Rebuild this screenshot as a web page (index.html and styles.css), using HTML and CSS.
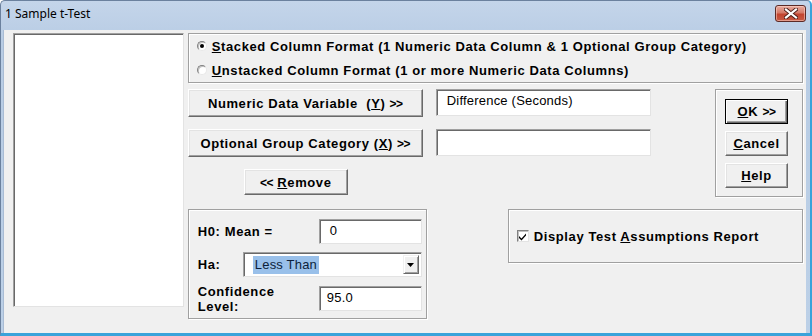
FILE: index.html
```html
<!DOCTYPE html>
<html>
<head>
<meta charset="utf-8">
<link rel="stylesheet" href="styles.css">
</head>
<body>
<div class="window">
  <div class="titlebar">
    <span class="title">1 Sample t-Test</span>
    <div class="close">
      <svg width="14" height="11" viewBox="0 0 14 11">
        <path d="M2 1.5 L12 9.5 M12 1.5 L2 9.5" stroke="#4a1c16" stroke-width="4" stroke-linecap="square"/>
        <path d="M2 1.5 L12 9.5 M12 1.5 L2 9.5" stroke="#ffffff" stroke-width="2.2" stroke-linecap="square"/>
      </svg>
    </div>
  </div>
  <div class="client">
    <div class="listbox"></div>
    <div class="main">
      <div class="group radio-group">
        <div class="radio-row"><span class="radio checked"></span><span class="lbl"><u>S</u>tacked Column Format (1 Numeric Data Column &amp; 1 Optional Group Category)</span></div>
        <div class="radio-row"><span class="radio"></span><span class="lbl"><u>U</u>nstacked Column Format (1 or more Numeric Data Columns)</span></div>
      </div>
      <div class="mid">
        <div class="fields">
          <div class="field-row">
            <div class="btn wide"><span>Numeric Data Variable&nbsp; (<u>Y</u>) <span class="chev">&gt;&gt;</span></span></div>
            <div class="textbox"><span>Difference (Seconds)</span></div>
          </div>
          <div class="field-row">
            <div class="btn wide"><span>Optional Group Category (<u>X</u>) <span class="chev">&gt;&gt;</span></span></div>
            <div class="textbox"></div>
          </div>
          <div class="btn remove"><span><span class="chev">&lt;&lt;</span> <u>R</u>emove</span></div>
        </div>
        <div class="group btnbox">
          <div class="btn small default"><span><u>O</u>K <span class="chev">&gt;&gt;</span></span></div>
          <div class="btn small"><span><u>C</u>ancel</span></div>
          <div class="btn small"><span><u>H</u>elp</span></div>
        </div>
      </div>
      <div class="bottom">
        <div class="group hyp">
          <div class="hrow r1">
            <span class="lbl">H0: Mean =</span>
            <div class="textbox num"><span>0</span></div>
          </div>
          <div class="hrow r2">
            <span class="lbl ha">Ha:</span>
            <div class="combo">
              <span class="combo-text"><span class="sel">Less Than</span></span>
              <span class="combo-btn">
                <svg width="7" height="4" viewBox="0 0 7 4"><path d="M0 0 H7 L3.5 4 Z" fill="#000"/></svg>
              </span>
            </div>
          </div>
          <div class="hrow r3">
            <span class="lbl two">Confidence<br>Level:</span>
            <div class="textbox num"><span>95.0</span></div>
          </div>
        </div>
        <div class="group check-group">
          <span class="checkbox">
            <svg width="9" height="9" viewBox="0 0 9 9"><path d="M1 4 L3.5 6.5 L8 1.5 V3.5 L3.5 8.5 L1 6 Z" fill="#000"/></svg>
          </span>
          <span class="lbl">Display Test <u>A</u>ssumptions Report</span>
        </div>
      </div>
    </div>
  </div>
</div>
</body>
</html>
```

FILE: styles.css
```css
* { box-sizing: border-box; }
html, body { margin: 0; padding: 0; background: #ffffff; }
.window {
  width: 812px;
  height: 336px;
  display: flex;
  flex-direction: column;
  background: linear-gradient(#c4d5ea, #b8cce4 40px, #bcd0e7);
  border-right: 2px solid #3aa3da;
  border-bottom: 3px solid #3aa3da;
  border-top: 1px solid #6b819e;
  border-left: 1px solid #6b819e;
  border-radius: 5px 5px 0 0;
  font-family: "Liberation Sans", Arial, sans-serif;
  font-size: 13px;
  color: #000;
}
.titlebar {
  height: 29px;
  flex: none;
  display: flex;
  align-items: flex-start;
  justify-content: space-between;
  padding: 0 4px 0 4px;
}
.title {
  font-family: "Noto Sans", "Open Sans", sans-serif;
  font-size: 12px;
  line-height: 26px;
  color: #000;
}
.close {
  margin-top: 4px;
  width: 31px;
  height: 17px;
  border: 1px solid #5c2a26;
  border-radius: 3px;
  background: linear-gradient(#e8ab9f, #d57a68 45%, #c2442f 55%, #c75a44);
  display: flex;
  align-items: center;
  justify-content: center;
  box-shadow: inset 0 0 0 1px rgba(255,220,210,0.5);
}
.client {
  flex: 1;
  margin: 0 4px 0 2px;
  background: #f0f0f0;
  display: flex;
  gap: 4px;
  padding: 3px 3px 0 9px;
  border-left: 1px solid #a9bcd4;
}
.listbox {
  width: 171px;
  height: 274px;
  background: #fff;
  border: 1px solid;
  border-color: #a0a0a0 #e3e3e3 #e3e3e3 #a0a0a0;
  box-shadow: inset 1px 1px 0 #696969;
}
.main {
  width: 616px;
  display: flex;
  flex-direction: column;
}
.group {
  border: 1px solid #a0a0a0;
  box-shadow: 1px 1px 0 #fff, inset 1px 1px 0 #fff;
}
.lbl { font-weight: bold; white-space: nowrap; letter-spacing: 0.6px; }
.radio-group {
  height: 50px;
  display: flex;
  flex-direction: column;
  padding-left: 8px;
}
.radio-row {
  height: 24px;
  display: flex;
  align-items: center;
  gap: 5px;
}
.radio {
  width: 10px;
  height: 10px;
  border-radius: 50%;
  background: #fff;
  border: 1px solid;
  border-color: #808080 #e8e8e8 #e8e8e8 #808080;
  box-shadow: inset 1px 1px 0 #c0c0c0;
  position: relative;
  flex: none;
}
.radio.checked::after {
  content: "";
  position: absolute;
  left: 2px;
  top: 2px;
  width: 4px;
  height: 4px;
  border-radius: 50%;
  background: #000;
}
.mid {
  margin-top: 6px;
  display: flex;
}
.fields {
  width: 463px;
  display: flex;
  flex-direction: column;
  gap: 12px;
}
.field-row {
  display: flex;
  gap: 13px;
  align-items: flex-start;
}
.btn {
  background: #f0f0f0;
  border: 1px solid;
  border-color: #ffffff #696969 #696969 #ffffff;
  box-shadow: inset -1px -1px 0 #a0a0a0, inset 1px 1px 0 #e3e3e3;
  font-weight: bold;
  letter-spacing: 0.6px;
  display: flex;
  align-items: center;
  justify-content: center;
  white-space: nowrap;
}
.chev { font-size: 12px; letter-spacing: -0.5px; }
.btn.wide { width: 235px; height: 28px; }
.btn.remove { width: 104px; height: 26px; margin-left: 56px; }
.textbox {
  background: #fff;
  border: 1px solid;
  border-color: #a0a0a0 #e3e3e3 #e3e3e3 #a0a0a0;
  box-shadow: inset 1px 1px 0 #696969;
  font-weight: normal;
  letter-spacing: 0.2px;
  display: flex;
  align-items: center;
}
.field-row .textbox {
  width: 215px;
  height: 27px;
  padding: 0 0 4px 10px;
}
.btnbox {
  margin-left: auto;
  width: 88px;
  height: 108px;
  padding: 9px 0 0 9px;
  display: flex;
  flex-direction: column;
  gap: 7px;
}
.btn.small { width: 63px; height: 25px; }
.btn.default {
  border: 1px solid #000;
  box-shadow: inset 1px 1px 0 #fff, inset -1px -1px 0 #696969, inset -2px -2px 0 #a0a0a0;
}
.bottom {
  margin-top: 12px;
  display: flex;
  align-items: flex-start;
}
.hyp {
  width: 239px;
  height: 110px;
  padding: 9px 4px 0 9px;
  display: flex;
  flex-direction: column;
}
.hrow {
  display: flex;
  align-items: center;
  justify-content: space-between;
}
.r2 { margin-top: 8px; }
.r3 { margin-top: 6px; }
.textbox.num {
  width: 103px;
  height: 25px;
  padding: 0 0 2px 10px;
}
.r3 .textbox.num { padding-left: 7px; }
.two { line-height: 15px; margin-top: 1px; }
.ha { width: 45px; }
.combo {
  width: 179px;
  height: 25px;
  background: #fff;
  border: 1px solid;
  border-color: #a0a0a0 #e3e3e3 #e3e3e3 #a0a0a0;
  box-shadow: inset 1px 1px 0 #696969;
  display: flex;
  align-items: center;
  padding: 2px 2px 2px 9px;
}
.combo-text { flex: 1; display: flex; align-items: center; }
.sel {
  background: #99c0ea;
  color: #0c1f3a;
  padding: 1px 2px 2px 2px;
  line-height: 15px;
  letter-spacing: 0.2px;
}
.combo-btn {
  width: 16px;
  height: 19px;
  background: #f0f0f0;
  border: 1px solid;
  border-color: #f0f0f0 #696969 #696969 #f0f0f0;
  box-shadow: inset 1px 1px 0 #fff, inset -1px -1px 0 #a0a0a0;
  display: flex;
  align-items: center;
  justify-content: center;
}
.check-group {
  width: 295px;
  height: 54px;
  margin-left: 81px;
  display: flex;
  align-items: center;
  gap: 5px;
  padding: 0 0 0 8px;
}
.checkbox {
  width: 12px;
  height: 12px;
  background: #fff;
  border: 1px solid;
  border-color: #808080 #e3e3e3 #e3e3e3 #808080;
  box-shadow: inset 1px 1px 0 #c0c0c0;
  display: flex;
  align-items: center;
  justify-content: center;
  flex: none;
}
```
